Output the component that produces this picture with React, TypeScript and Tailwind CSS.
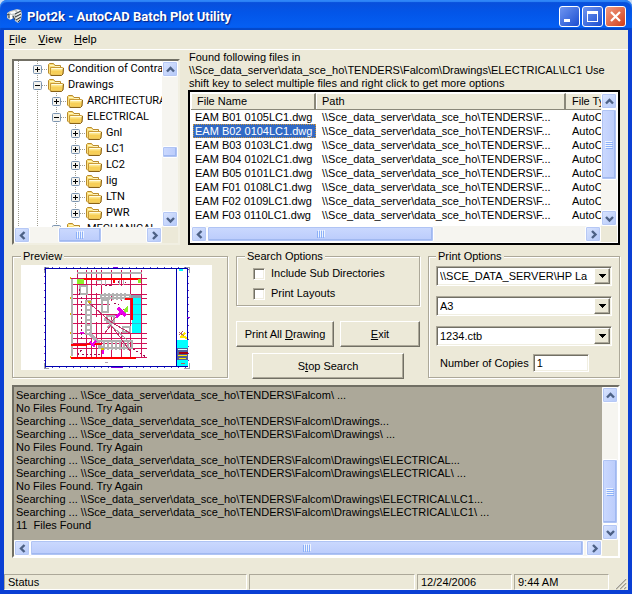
import React from "react";

const sans = "font-['Liberation_Sans',Arial,sans-serif]";
const ui = "font-['Roboto',Tahoma,sans-serif]";

type Direction = "up" | "down" | "left" | "right";

const chevrons: Record<Direction, string> = {
  up: "M4 9.5 L7.5 6 L11 9.5",
  down: "M4 6 L7.5 9.5 L11 6",
  left: "M9.5 4 L6 7.5 L9.5 11",
  right: "M6 4 L9.5 7.5 L6 11",
};

function ArrowButton({ dir }: { dir: Direction }) {
  return (
    <button
      type="button"
      aria-label={`Scroll ${dir}`}
      className="flex size-4 shrink-0 items-center justify-center rounded-[2px] border border-white bg-linear-to-br from-[#dbe5fe] to-[#b4c8f8] shadow-[inset_0_0_0_1px_#b6c8f5]"
    >
      <svg width="15" height="15" viewBox="0 0 15 15" className="shrink-0">
        <path d={chevrons[dir]} fill="none" stroke="#4d6185" strokeWidth="2.4" />
      </svg>
    </button>
  );
}

function Grip({ vertical }: { vertical?: boolean }) {
  return (
    <svg width="8" height="8" viewBox="0 0 8 8" className={vertical ? "" : "rotate-90"}>
      <path d="M0 0.5H7M0 2.5H7M0 4.5H7M0 6.5H7" stroke="#eef4fe" />
      <path d="M1 1.5H8M1 3.5H8M1 5.5H8M1 7.5H8" stroke="#8cb0f8" />
    </svg>
  );
}

function ScrollBar({
  vertical,
  before,
  thumb,
  after,
  grip = true,
}: {
  vertical?: boolean;
  before: string;
  thumb: string;
  after: string;
  grip?: boolean;
}) {
  return (
    <div
      className={
        vertical
          ? "flex h-full w-4 flex-col bg-[#f6f5f0]"
          : "flex h-4 w-full flex-row bg-[#f6f5f0]"
      }
    >
      <ArrowButton dir={vertical ? "up" : "left"} />
      <div className={before} />
      <div
        className={`${thumb} flex items-center justify-center rounded-[2px] border border-white shadow-[inset_0_0_0_1px_#b0c4f4,inset_-1px_-1px_0_1px_#a0b8f0] ${
          vertical ? "bg-linear-to-r" : "bg-linear-to-b"
        } from-[#cbd9fe] to-[#bacbfb]`}
      >
        {grip && <Grip vertical={vertical} />}
      </div>
      <div className={after} />
      <ArrowButton dir={vertical ? "down" : "right"} />
    </div>
  );
}

function Folder() {
  return (
    <svg width="16" height="16" viewBox="0 0 16 16" className="shrink-0">
      <path d="M0.5 3.5 L1.5 2.5 H5.5 L7 4.5 H12.5 V6 H13 L14 12 L12 13.5 H2 L0.5 12 Z" fill="#fbe07a" stroke="#b98a2c" />
      <path d="M2 4.5 H6 L7 5.5 H12" fill="none" stroke="#fff6c0" />
      <path d="M2.5 6.5 H14.5 Q15.5 6.5 15.3 7.5 L14.6 13 L13.5 14 H3.5 L2.5 13 Z" fill="#fde68c" stroke="#c99a36" />
      <path d="M3 9.5 H15 L14.4 13.5 H3.5 Z" fill="#f7cf58" />
      <path d="M3.5 7.5 H14.5" stroke="#fffbe0" />
      <path d="M2.5 14.5 H13.5 L15 13 L15.5 7" fill="none" stroke="#8a6216" />
    </svg>
  );
}

function Guide({ first }: { first?: boolean }) {
  return (
    <svg width={first ? 14 : 19} height="16" className="shrink-0">
      <path d={first ? "M4.5 0V16" : "M9.5 0V16"} stroke="#a09d90" strokeDasharray="1 1" />
    </svg>
  );
}

function Expander({ open, label }: { open?: boolean; label: string }) {
  return (
    <button type="button" aria-label={`Toggle ${label}`} className="h-4 w-5 shrink-0">
      <svg width="20" height="16">
        <path d="M9.5 0V16M14 8.5H20" stroke="#a09d90" strokeDasharray="1 1" />
        <rect x="5.5" y="4.5" width="8" height="8" rx="1" fill="#f4f3ee" stroke="#7b94b0" />
        <path d={open ? "M7 8.5H12" : "M7 8.5H12M9.5 6V11"} stroke="#000" />
      </svg>
    </button>
  );
}

const tree = [
  { level: 1, name: "Condition of Contract" },
  { level: 1, name: "Drawings", open: true },
  { level: 2, name: "ARCHITECTURAL" },
  { level: 2, name: "ELECTRICAL", open: true },
  { level: 3, name: "Gnl" },
  { level: 3, name: "LC1" },
  { level: 3, name: "LC2" },
  { level: 3, name: "lig" },
  { level: 3, name: "LTN" },
  { level: 3, name: "PWR" },
  { level: 2, name: "MECHANICAL" },
];

function FolderTree() {
  return (
    <div className="mt-2 flex h-[186px] w-[168px] shrink-0 flex-col border-2 border-t-[#716f64] border-r-[#f1efe2] border-b-[#f1efe2] border-l-[#716f64] bg-white">
      <div className="flex min-h-0 flex-1">
        <ul className={`${ui} min-w-0 flex-1 overflow-hidden text-[11px] leading-4`}>
          {tree.map((n) => (
            <li key={n.name} className="flex whitespace-nowrap">
              <Guide first />
              {n.level > 1 && <Guide />}
              {n.level > 2 && <Guide />}
              <Expander open={n.open} label={n.name} />
              <Folder />
              <span className="pl-1">{n.name}</span>
            </li>
          ))}
        </ul>
        <ScrollBar vertical before="h-[69px]" thumb="h-[12px]" after="flex-1" grip={false} />
      </div>
      <div className="flex bg-[#ece9d8] pr-4">
        <ScrollBar before="w-7" thumb="w-[44px]" after="flex-1" />
      </div>
    </div>
  );
}

const files = [
  "EAM B01 0105LC1.dwg",
  "EAM B02 0104LC1.dwg",
  "EAM B03 0103LC1.dwg",
  "EAM B04 0102LC1.dwg",
  "EAM B05 0101LC1.dwg",
  "EAM F01 0108LC1.dwg",
  "EAM F02 0109LC1.dwg",
  "EAM F03 0110LC1.dwg",
];

const headCell =
  "h-[17px] border-t border-r-2 border-b border-t-white border-r-[#8a887a] border-b-[#8a887a] bg-[#ece9d8] p-0 pl-1.5 text-left font-normal shadow-[inset_1px_0_0_#fff]";

function FileList() {
  return (
    <div className="flex h-[155px] flex-col border-2 border-black bg-white p-px">
      <div className="flex min-h-0 flex-1">
        <div className="min-w-0 flex-1 overflow-hidden">
          <table className="w-full table-fixed border-separate border-spacing-0 whitespace-nowrap">
            <colgroup>
              <col className="w-[125px]" />
              <col className="w-[250px]" />
              <col />
            </colgroup>
            <thead>
              <tr>
                <th className={headCell}>File Name</th>
                <th className={headCell}>Path</th>
                <th className="h-[17px] overflow-hidden border-t border-b border-t-white border-b-[#8a887a] bg-[#ece9d8] p-0 pl-1.5 text-left font-normal">
                  File Type
                </th>
              </tr>
            </thead>
            <tbody>
              {files.map((f, i) => (
                <tr key={f} className="h-3.5 leading-[14px]">
                  <td className="p-0 pl-0.5">
                    <div
                      className={
                        i === 1
                          ? "bg-[#316ac5] pl-0.5 text-white outline-1 -outline-offset-1 outline-[#ce953a] outline-dotted"
                          : "pl-0.5"
                      }
                    >
                      {f}
                    </div>
                  </td>
                  <td className="p-0 pl-1.5">{"\\\\Sce_data_server\\data_sce_ho\\TENDERS\\F..."}</td>
                  <td className="overflow-hidden p-0 pl-1.5">AutoCAD</td>
                </tr>
              ))}
            </tbody>
          </table>
        </div>
        <ScrollBar vertical before="h-0" thumb="h-[71px]" after="flex-1" />
      </div>
      <div className="flex bg-[#ece9d8] pr-4">
        <ScrollBar before="w-0" thumb="w-[227px]" after="flex-1" />
      </div>
    </div>
  );
}

function Group({ title, className, children }: { title: string; className: string; children: React.ReactNode }) {
  return (
    <fieldset
      className={`min-w-0 border border-[#aca899] shadow-[1px_1px_0_#fff,inset_1px_1px_0_#fff] ${className}`}
    >
      <legend className="bg-[#ece9d8] px-0.5 leading-[13px]">{title}</legend>
      {children}
    </fieldset>
  );
}

function DrawingPreview() {
  const columns = [56, 65, 70, 75, 80, 90, 100, 109, 120];
  const rows = [13, 19, 29, 33, 39, 49, 58, 68, 73, 78, 83, 92];
  return (
    <svg viewBox="0 0 191 105" className="w-full bg-white" shapeRendering="crispEdges">
      <path d="M23 8V2H28M163 2H168V8M168 98V103H163M28 103H23V98" fill="none" stroke="#a0a0a8" />
      <rect x="24.5" y="3.5" width="142" height="98" fill="none" stroke="#0000b0" />
      <path d="M155.5 4V101" stroke="#0000b0" />
      <path d="M24 2.5H167M24 102.5H167" stroke="#4040c0" strokeDasharray="1 6" />
      <path d="M23.5 4V102M167.5 4V102" stroke="#7030c0" strokeDasharray="1 6" />
      <path d="M90 102.5H102M92 2.5H97M166 52.5H169" stroke="#8000e0" />
      {columns.map((x) => (
        <path key={x} d={`M${x}.5 5V${x > 85 && x < 105 ? 21 : 93}`} stroke="#d01458" />
      ))}
      <path d="M90.5 49V93M100.5 62V93M90.5 29V36M100.5 29V36" stroke="#d01458" />
      {rows.map((y) => (
        <path key={y} d={`M50 ${y}.5H126`} stroke="#d01458" />
      ))}
      <path d="M71 21H79V28H71ZM89 36H109V48H89ZM71 52H79V57H71ZM93 60H108V67H93Z" fill="#fff" />
      <path d="M56 7H121V9H56Z M50 14H52V91H50Z" fill="#b4b4b4" />
      <path d="M59 21H66V29H59ZM80 30H109V33H80ZM81 35H87V47H81ZM65 36H70V69H65ZM86 51H93V57H86ZM78 76H111V83H78ZM102 62H109V67H102Z" fill="none" stroke="#b0b0b0" strokeWidth="2" />
      <path d="M66 40H71M66 45H71M66 50H71M66 55H71M66 60H71M66 65H71M83 76V85M87 76V85M91 76V85M95 76V85M99 76V85M103 76V85M107 76V85M84 28V35M88 28V35M92 28V35M96 28V35M100 28V35M104 28V35" stroke="#b4b4b4" strokeWidth="2" />
      <path d="M98 14V20M102 14V20M75 15H80V20M84 15V20" stroke="#b4b4b4" fill="none" />
      <path d="M111 31H120V68H111Z" fill="#00ffff" />
      <path d="M110 30H120V33H110Z" fill="#8a9cac" />
      <path d="M111 39.5H120M111 49.5H120M111 58.5H120" stroke="#30b8d8" />
      <path d="M83 54L91 57L87 63M69 69L82 84M68 68L78 78" fill="none" stroke="#b4afb4" strokeWidth="3" />
      <path d="M67 37L90 57L109 68M90 57L103 44M84 68L90 60L109 86" fill="none" stroke="#c03068" />
      <path d="M90 60L108 77" stroke="#b0a0a8" />
      <path d="M62 13.5H93V18M93 13.5H119M104 33.5H111V55M50 79.5H66M66 78.5H80M50 92.5H115" fill="none" stroke="#f00" strokeWidth="2" />
      <path d="M56 14H63V19H56ZM117 14H120V18H117ZM103 44L107 41V47L103 48Z" fill="#8cf028" />
      <path d="M97 43L105 51M95 52L102 46" stroke="#e800e8" strokeWidth="3" />
      <path d="M70 81L75 76M69 77L74 82M59 67.5H63M82 85V89" stroke="#e800e8" strokeWidth="2" />
      <path d="M49 13H50M49 33H50M49 49H50M49 68H50M49 92H50M80 84H83M67 37H70" stroke="#d8b800" strokeWidth="2" />
      <path d="M60.5 32V76M61 89H79M84 20.5H91M97 16V20M104 17L108 20M58 24V30M93 38L100 41M112 84L125 92M57 90L61 84" fill="none" stroke="#a01050" strokeDasharray="2 2" />
      <path d="M84 97.5H87" stroke="#b0a0b0" />
      <path d="M156 75H167V83H156ZM156 95H167V101H156ZM158 4H162V6H158Z" fill="#00ffff" />
      <path d="M156 83H167V95H156Z" fill="#50609a" />
      <path d="M157 84H166V85H157Z" fill="#d8ffff" />
      <path d="M158 87H167V89H158Z" fill="#a00010" />
      <path d="M157 90H166V91H157ZM158 93H165V94H158Z" fill="#ffe800" />
      <path d="M159 73L164 68M160 71L166 73" stroke="#ffe800" strokeWidth="2" />
      <path d="M158 67L163 71M162 66L158 70M160 98H164" stroke="#b06060" />
    </svg>
  );
}

const sunken =
  "border border-t-[#aca899] border-r-white border-b-white border-l-[#aca899] bg-white shadow-[inset_1px_1px_0_#716f64,inset_-1px_-1px_0_#f1efe2]";

function Combo({ label, value }: { label: string; value: string }) {
  return (
    <div className="relative h-5">
      <select aria-label={label} className={`${sunken} h-full w-full appearance-none overflow-hidden pr-5 pl-[3px]`}>
        <option>{value}</option>
      </select>
      <span className="pointer-events-none absolute inset-y-0.5 right-0.5 flex w-4 items-center justify-center border border-t-white border-r-[#716f64] border-b-[#716f64] border-l-white bg-[#ece9d8] shadow-[inset_-1px_-1px_0_#aca899]">
        <svg width="7" height="4" shapeRendering="crispEdges">
          <path d="M0 0H7L3.5 4Z" />
        </svg>
      </span>
    </div>
  );
}

function CheckRow({ id, label }: { id: string; label: string }) {
  return (
    <div className="flex items-center">
      <input id={id} type="checkbox" className={`${sunken} size-3 shrink-0 appearance-none`} />
      <label htmlFor={id} className="pl-1.5 leading-[13px]">
        {label}
      </label>
    </div>
  );
}

const pushButton =
  "h-[26px] border border-t-white border-r-[#716f64] border-b-[#716f64] border-l-white bg-[#ece9d8] shadow-[inset_-1px_-1px_0_#aca899]";

const base = "\\\\Sce_data_server\\data_sce_ho\\TENDERS\\Falcom\\";
const log = [
  `Searching ... ${base} ...`,
  "No Files Found. Try Again",
  `Searching ... ${base}Drawings...`,
  `Searching ... ${base}Drawings\\ ...`,
  "No Files Found. Try Again",
  `Searching ... ${base}Drawings\\ELECTRICAL...`,
  `Searching ... ${base}Drawings\\ELECTRICAL\\ ...`,
  "No Files Found. Try Again",
  `Searching ... ${base}Drawings\\ELECTRICAL\\LC1...`,
  `Searching ... ${base}Drawings\\ELECTRICAL\\LC1\\ ...`,
  "11  Files Found",
];

function TitleBar() {
  const glass =
    "flex size-[21px] items-center justify-center rounded-[3px] border border-white bg-linear-to-br";
  return (
    <header className="flex h-[30px] items-center gap-0.5 rounded-t-[7px] bg-linear-to-b from-[#0a4ed8] via-[#0355e8] via-40% to-[#0561f5] pt-0.5 pr-1.5 pl-[7px] shadow-[inset_0_2px_1px_#2f86f8,inset_0_-2px_1px_#0447c8]">
      <svg width="16" height="16" viewBox="0 0 16 16" className="shrink-0">
        <path d="M0 5L3 3L10 1L14 2L15 6L14 12L11 15L8 13L7 10L3 12L0 10Z" fill="#c4c8c8" />
        <path d="M3 4L8 3L9 5L4 6ZM2 7L5 7V11L3 11ZM10 2L13 2L11 4Z" fill="#fff" />
        <path d="M0 7L2 6V10M8 6L14 3M8 9L14 6M9 12L14 9M11 14L13 12M6 8L8 12" fill="none" stroke="#30383c" />
        <path d="M9 7L14 4.5M9 10.5L14 7.5" stroke="#f4f4f0" />
      </svg>
      <h1 className="flex-1 pl-0.5 font-['Roboto','Trebuchet_MS',sans-serif] text-[13px] font-bold text-white [text-shadow:1px_1px_1px_#0a1f80]">
        Plot2k - AutoCAD Batch Plot Utility
      </h1>
      <button type="button" aria-label="Minimize" className={`${glass} from-[#6f95f0] to-[#1c4cd0]`}>
        <svg width="13" height="13">
          <path d="M1 9H7V12H1Z" fill="#fff" />
        </svg>
      </button>
      <button type="button" aria-label="Maximize" className={`${glass} from-[#6f95f0] to-[#1c4cd0]`}>
        <svg width="13" height="13" shapeRendering="crispEdges">
          <path d="M1 1H12V12H1ZM2 4V11H11V4Z" fill="#fff" fillRule="evenodd" />
        </svg>
      </button>
      <button type="button" aria-label="Close" className={`${glass} from-[#f09a80] to-[#d03a10]`}>
        <svg width="13" height="13">
          <path d="M2 2L11 11M11 2L2 11" stroke="#fff" strokeWidth="2.2" />
        </svg>
      </button>
    </header>
  );
}

const statusPanel =
  "flex h-4 items-center border border-t-[#aca899] border-r-white border-b-white border-l-[#aca899] pl-[3px]";

export default function App() {
  return (
    <div className={`${sans} flex min-h-screen flex-col bg-[#c9dcf4] text-[11px] leading-[13px] text-black`}>
      <TitleBar />
      <div className="flex flex-1 flex-col border-x-4 border-b-4 border-[#0a3fd4] bg-[#ece9d8]">
        <nav className={`${ui} flex h-5 items-center gap-3 border-b border-white pl-[5px]`}>
          <button type="button"><u>F</u>ile</button>
          <button type="button"><u>V</u>iew</button>
          <button type="button"><u>H</u>elp</button>
        </nav>

        <main className="flex-1 px-2 pt-px">
          <div className="flex gap-2">
            <FolderTree />
            <section className="min-w-0 flex-1">
              <p className="pl-px whitespace-nowrap">
                Found following files in
                <br />
                {base}Drawings\ELECTRICAL\LC1 Use
                <br />
                shift key to select multiple files and right click to get more options
              </p>
              <FileList />
            </section>
          </div>

          <div className="mt-[5px] grid grid-cols-[216fr_184fr_192fr] gap-x-2">
            <Group title="Preview" className="mb-px px-2">
              <div className="pt-0.5 pr-[7px]">
                <DrawingPreview />
              </div>
            </Group>

            <div className="flex flex-col">
              <Group title="Search Options" className="h-14 px-2">
                <div className="flex flex-col gap-[7px] pt-1 pl-2">
                  <CheckRow id="sub" label="Include Sub Directories" />
                  <CheckRow id="layouts" label="Print Layouts" />
                </div>
              </Group>
              <div className="mt-[15px] flex gap-1.5">
                <button type="button" className={`${pushButton} w-[98px]`}>
                  Print All <u>D</u>rawing
                </button>
                <button type="button" className={`${pushButton} flex-1`}>
                  <u>E</u>xit
                </button>
              </div>
              <button type="button" className={`${pushButton} mx-4 mt-1.5`}>
                S<u>t</u>op Search
              </button>
            </div>

            <Group title="Print Options" className="mb-px px-[7px]">
              <div className="flex flex-col gap-2.5 pt-[3px]">
                <Combo label="Printer" value="\\SCE_DATA_SERVER\HP La" />
                <Combo label="Paper size" value="A3" />
                <Combo label="Plot style" value="1234.ctb" />
              </div>
              <div className="mt-2 flex items-center gap-1 pl-1">
                <label htmlFor="copies">Number of Copies</label>
                <input id="copies" defaultValue="1" className={`${sunken} h-[18px] w-14 pl-[3px]`} />
              </div>
            </Group>
          </div>

          <section className="mt-1.5 flex h-[173px] flex-col border-2 border-t-[#716f64] border-r-white border-b-white border-l-[#716f64] bg-[#aca899]">
            <div className="flex min-h-0 flex-1">
              <div className="min-w-0 flex-1 overflow-hidden pt-0.5 pl-0.5 whitespace-pre">
                {log.map((line, i) => (
                  <div key={i}>{line}</div>
                ))}
              </div>
              <ScrollBar vertical before="flex-1" thumb="h-[65px]" after="h-0" />
            </div>
            <div className="flex bg-[#ece9d8] pr-4">
              <ScrollBar before="w-0" thumb="flex-1" after="w-0.5" />
            </div>
          </section>
        </main>

        <footer className="flex gap-0.5">
          <div className={`${statusPanel} w-[243px]`}>Status</div>
          <div className={`${statusPanel} flex-1`} />
          <div className={`${statusPanel} w-[95px]`}>12/24/2006</div>
          <div className={`${statusPanel} w-[95px]`}>9:44 AM</div>
          <svg width="17" height="16">
            <path d="M5 15L15 5M9 15L15 9M13 15L15 13" stroke="#a19e8f" strokeWidth="1.6" />
            <path d="M4 15L15 4M8 15L15 8M12 15L15 12" stroke="#fff" strokeWidth="0.6" />
          </svg>
        </footer>
      </div>
    </div>
  );
}
